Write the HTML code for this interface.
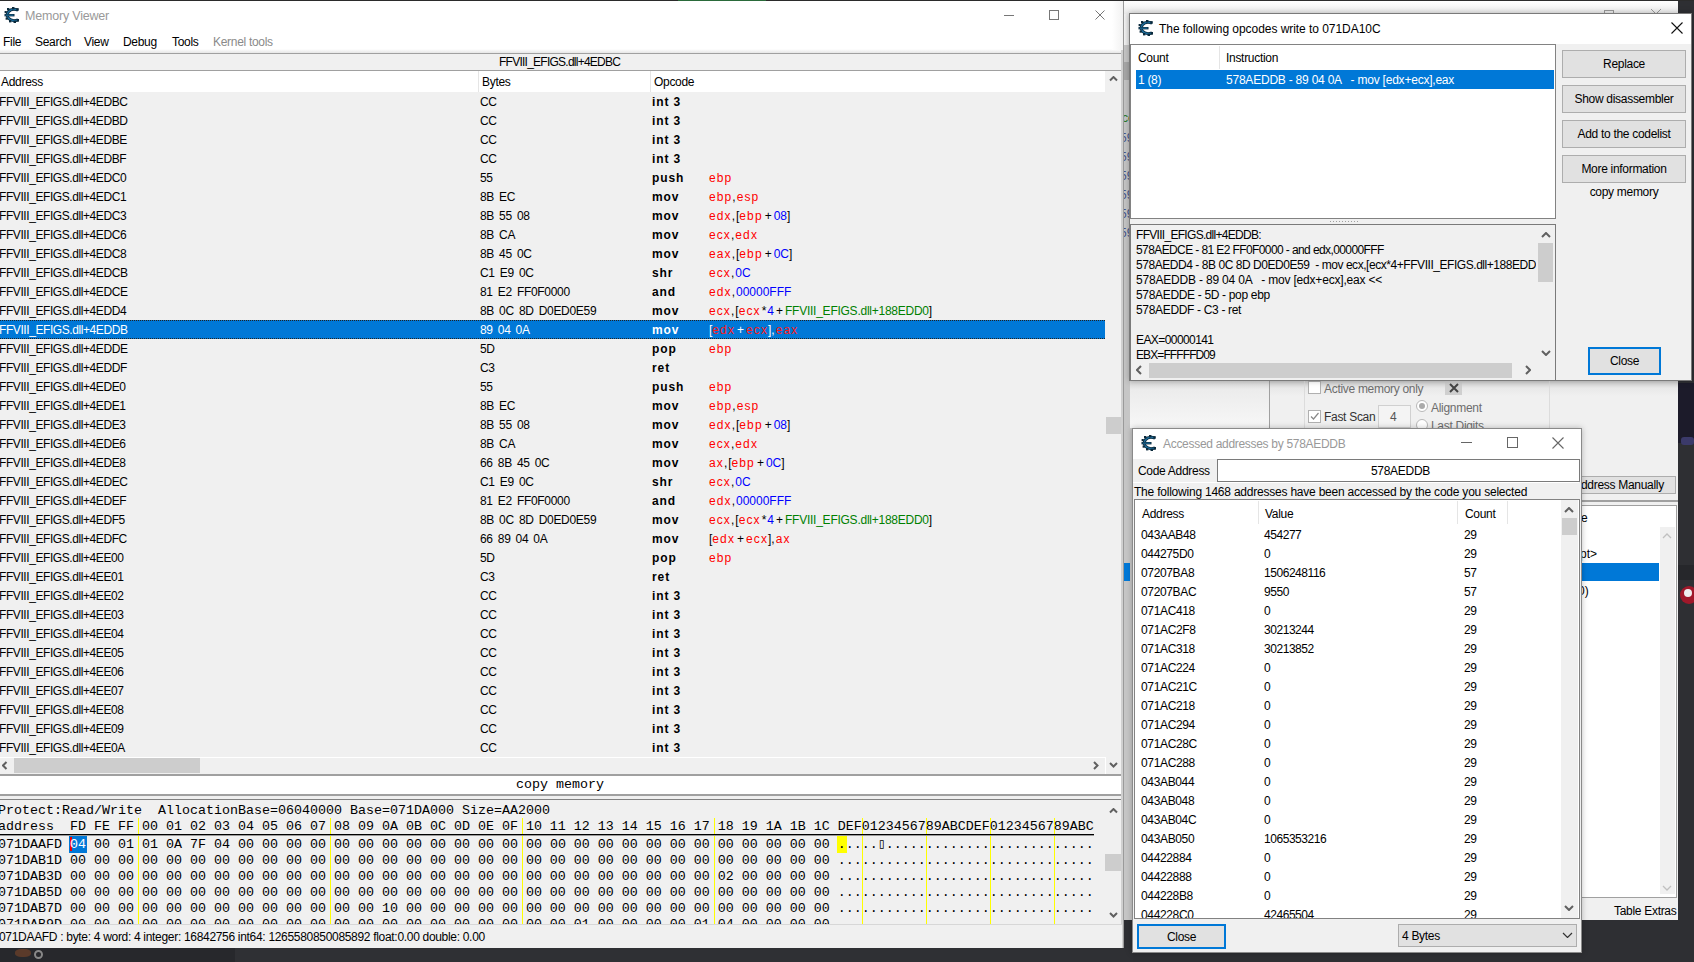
<!DOCTYPE html><html><head><meta charset="utf-8"><style>
*{margin:0;padding:0;box-sizing:border-box}
html,body{width:1694px;height:962px;overflow:hidden;background:#2e2f33;font-family:"Liberation Sans", sans-serif;font-size:12px;color:#000}
.a{position:absolute}
.t{position:absolute;white-space:pre;line-height:14px;padding-top:1px}
.m{font-family:"Liberation Mono", monospace;font-size:13.33px;line-height:16px;white-space:pre;position:absolute}
.b{font-weight:bold}
.r{color:#f00} .bl{color:#00f} .g{color:#008000}
</style></head><body>

<div class="a" style="left:1122px;top:0;width:556px;height:920px;background:#f0f0f0;border-right:1px solid #5a5a5a"></div>
<div class="a" style="left:1122px;top:1px;width:556px;height:13px;background:linear-gradient(#fff,#eaeaea)"></div>
<div class="a" style="left:0;top:0;width:1694px;height:1px;background:#2b2b2b"></div>
<div class="a" style="left:678px;top:0;width:88px;height:1px;background:#2a6a3a"></div>
<div class="a" style="left:0;top:1px;width:1123px;height:947px;background:#f0f0f0"></div>
<div class="a" style="left:0;top:1px;width:1123px;height:49px;background:#fff"></div>
<div class="a" style="left:0;top:49px;width:1123px;height:4px;background:linear-gradient(#fff,#e6e6e6)"></div>
<svg class="a" style="left:4px;top:7px" width="15" height="16" viewBox="0 0 15 16">
<path d="M14 3.2 Q8 0.8 4.2 5 Q2.6 8 4.2 11 Q8 15.2 14 12.8" fill="none" stroke="#0b2a3c" stroke-width="3"/>
<path d="M14 3.2 Q8 0.8 4.2 5 Q2.6 8 4.2 11 Q8 15.2 14 12.8" fill="none" stroke="#1c6e9e" stroke-width="1.4"/>
<rect x="0.5" y="7" width="10" height="2.4" fill="#0b2a3c"/><rect x="1.5" y="7.6" width="8" height="1.1" fill="#1c6e9e"/>
<rect x="3" y="1" width="2.4" height="2.4" fill="#0b2a3c"/><rect x="8" y="0" width="2.4" height="2.4" fill="#0b2a3c"/><rect x="12.3" y="1.2" width="2.4" height="2.6" fill="#0b2a3c"/>
<rect x="0.6" y="4" width="2.2" height="2.2" fill="#0b2a3c"/><rect x="1.6" y="10.5" width="2.2" height="2.2" fill="#0b2a3c"/>
<rect x="5" y="13" width="2.4" height="2.4" fill="#0b2a3c"/><rect x="9.6" y="13.6" width="2.4" height="2.4" fill="#0b2a3c"/><rect x="12.6" y="12" width="2.4" height="2.6" fill="#0b2a3c"/>
</svg>
<div class="t " style="left:25px;top:8px;color:#999;font-size:12.5px;letter-spacing:-0.2px">Memory Viewer</div>
<div class="a" style="left:1004px;top:15px;width:10px;height:1px;background:#777"></div>
<div class="a" style="left:1049px;top:10px;width:10px;height:10px;border:1px solid #777"></div>
<svg class="a" style="left:1095px;top:10px" width="10" height="10"><path d="M0.5 0.5 L9.5 9.5 M9.5 0.5 L0.5 9.5" stroke="#777" stroke-width="1"/></svg>
<div class="a" style="left:1112px;top:1px;width:11px;height:49px;background:linear-gradient(90deg,#fff,#f2f2f2)"></div>
<div class="t " style="left:3px;top:34px;color:#000;letter-spacing:-0.3px">File</div>
<div class="t " style="left:35px;top:34px;color:#000;letter-spacing:-0.3px">Search</div>
<div class="t " style="left:84px;top:34px;color:#000;letter-spacing:-0.3px">View</div>
<div class="t " style="left:123px;top:34px;color:#000;letter-spacing:-0.3px">Debug</div>
<div class="t " style="left:172px;top:34px;color:#000;letter-spacing:-0.3px">Tools</div>
<div class="t " style="left:213px;top:34px;color:#8a8a8a;letter-spacing:-0.3px">Kernel tools</div>
<div class="a" style="left:0;top:53px;width:1122px;height:18px;background:#f0f0f0;border-top:1px solid #a0a0a0;border-bottom:1px solid #a0a0a0;border-right:1px solid #d8d8d8"></div>
<div class="t " style="left:499px;top:54px;letter-spacing:-0.75px">FFVIII_EFIGS.dll+4EDBC</div>
<div class="a" style="left:0;top:71px;width:1105px;height:21px;background:#fff"></div>
<div class="a" style="left:478px;top:71px;width:1px;height:21px;background:#e5e5e5"></div>
<div class="a" style="left:650px;top:71px;width:1px;height:21px;background:#e5e5e5"></div>
<div class="t " style="left:1px;top:74px;letter-spacing:-0.3px">Address</div>
<div class="t " style="left:482px;top:74px;letter-spacing:-0.3px">Bytes</div>
<div class="t " style="left:654px;top:74px;letter-spacing:-0.3px">Opcode</div>
<div class="a" style="left:1105px;top:71px;width:17px;height:686px;background:#f0f0f0"></div>
<svg class="a" style="left:1108.5px;top:76.25px" width="9" height="5.5"><polyline transform="translate(1,1)" points="0,3.5 3.5,0 7,3.5" fill="none" stroke="#606060" stroke-width="2"/></svg>
<svg class="a" style="left:1108.5px;top:762.25px" width="9" height="5.5"><polyline transform="translate(1,1)" points="0,0 3.5,3.5 7,0" fill="none" stroke="#606060" stroke-width="2"/></svg>
<div class="a" style="left:1106px;top:417px;width:15px;height:17px;background:#cdcdcd"></div>
<div class="a" style="left:0;top:92px;width:1105px;height:665px;overflow:hidden">
<div class="t" style="left:-1px;top:2px;color:#000;letter-spacing:-0.42px">FFVIII_EFIGS.dll+4EDBC</div>
<div class="t" style="left:480px;top:2px;color:#000;letter-spacing:-0.3px;word-spacing:2px">CC</div>
<div class="t b" style="left:652px;top:2px;color:#000;letter-spacing:0.9px">int 3</div>
<div class="t" style="left:-1px;top:21px;color:#000;letter-spacing:-0.42px">FFVIII_EFIGS.dll+4EDBD</div>
<div class="t" style="left:480px;top:21px;color:#000;letter-spacing:-0.3px;word-spacing:2px">CC</div>
<div class="t b" style="left:652px;top:21px;color:#000;letter-spacing:0.9px">int 3</div>
<div class="t" style="left:-1px;top:40px;color:#000;letter-spacing:-0.42px">FFVIII_EFIGS.dll+4EDBE</div>
<div class="t" style="left:480px;top:40px;color:#000;letter-spacing:-0.3px;word-spacing:2px">CC</div>
<div class="t b" style="left:652px;top:40px;color:#000;letter-spacing:0.9px">int 3</div>
<div class="t" style="left:-1px;top:59px;color:#000;letter-spacing:-0.42px">FFVIII_EFIGS.dll+4EDBF</div>
<div class="t" style="left:480px;top:59px;color:#000;letter-spacing:-0.3px;word-spacing:2px">CC</div>
<div class="t b" style="left:652px;top:59px;color:#000;letter-spacing:0.9px">int 3</div>
<div class="t" style="left:-1px;top:78px;color:#000;letter-spacing:-0.42px">FFVIII_EFIGS.dll+4EDC0</div>
<div class="t" style="left:480px;top:78px;color:#000;letter-spacing:-0.3px;word-spacing:2px">55</div>
<div class="t b" style="left:652px;top:78px;color:#000;letter-spacing:0.9px">push</div>
<div class="t" style="left:709px;top:78px;letter-spacing:-0.15px"><span style="color:#ff0000;letter-spacing:1.1px">ebp</span></div>
<div class="t" style="left:-1px;top:97px;color:#000;letter-spacing:-0.42px">FFVIII_EFIGS.dll+4EDC1</div>
<div class="t" style="left:480px;top:97px;color:#000;letter-spacing:-0.3px;word-spacing:2px">8B EC</div>
<div class="t b" style="left:652px;top:97px;color:#000;letter-spacing:0.9px">mov</div>
<div class="t" style="left:709px;top:97px;letter-spacing:-0.15px"><span style="color:#ff0000;letter-spacing:1.1px">ebp</span><span style="color:#000;letter-spacing:0"><span style="margin-right:1px">,</span></span><span style="color:#ff0000;letter-spacing:1.1px">esp</span></div>
<div class="t" style="left:-1px;top:116px;color:#000;letter-spacing:-0.42px">FFVIII_EFIGS.dll+4EDC3</div>
<div class="t" style="left:480px;top:116px;color:#000;letter-spacing:-0.3px;word-spacing:2px">8B 55 08</div>
<div class="t b" style="left:652px;top:116px;color:#000;letter-spacing:0.9px">mov</div>
<div class="t" style="left:709px;top:116px;letter-spacing:-0.15px"><span style="color:#ff0000;letter-spacing:1.1px">edx</span><span style="color:#000;letter-spacing:0"><span style="margin-right:1px">,</span>[</span><span style="color:#ff0000;letter-spacing:1.1px">ebp</span><span style="color:#000;letter-spacing:0"><span style="margin:0 2px">+</span></span><span style="color:#0000ff;letter-spacing:0">08</span><span style="color:#000;letter-spacing:0">]</span></div>
<div class="t" style="left:-1px;top:135px;color:#000;letter-spacing:-0.42px">FFVIII_EFIGS.dll+4EDC6</div>
<div class="t" style="left:480px;top:135px;color:#000;letter-spacing:-0.3px;word-spacing:2px">8B CA</div>
<div class="t b" style="left:652px;top:135px;color:#000;letter-spacing:0.9px">mov</div>
<div class="t" style="left:709px;top:135px;letter-spacing:-0.15px"><span style="color:#ff0000;letter-spacing:1.1px">ecx</span><span style="color:#000;letter-spacing:0"><span style="margin-right:1px">,</span></span><span style="color:#ff0000;letter-spacing:1.1px">edx</span></div>
<div class="t" style="left:-1px;top:154px;color:#000;letter-spacing:-0.42px">FFVIII_EFIGS.dll+4EDC8</div>
<div class="t" style="left:480px;top:154px;color:#000;letter-spacing:-0.3px;word-spacing:2px">8B 45 0C</div>
<div class="t b" style="left:652px;top:154px;color:#000;letter-spacing:0.9px">mov</div>
<div class="t" style="left:709px;top:154px;letter-spacing:-0.15px"><span style="color:#ff0000;letter-spacing:1.1px">eax</span><span style="color:#000;letter-spacing:0"><span style="margin-right:1px">,</span>[</span><span style="color:#ff0000;letter-spacing:1.1px">ebp</span><span style="color:#000;letter-spacing:0"><span style="margin:0 2px">+</span></span><span style="color:#0000ff;letter-spacing:0">0C</span><span style="color:#000;letter-spacing:0">]</span></div>
<div class="t" style="left:-1px;top:173px;color:#000;letter-spacing:-0.42px">FFVIII_EFIGS.dll+4EDCB</div>
<div class="t" style="left:480px;top:173px;color:#000;letter-spacing:-0.3px;word-spacing:2px">C1 E9 0C</div>
<div class="t b" style="left:652px;top:173px;color:#000;letter-spacing:0.9px">shr</div>
<div class="t" style="left:709px;top:173px;letter-spacing:-0.15px"><span style="color:#ff0000;letter-spacing:1.1px">ecx</span><span style="color:#000;letter-spacing:0"><span style="margin-right:1px">,</span></span><span style="color:#0000ff;letter-spacing:0">0C</span></div>
<div class="t" style="left:-1px;top:192px;color:#000;letter-spacing:-0.42px">FFVIII_EFIGS.dll+4EDCE</div>
<div class="t" style="left:480px;top:192px;color:#000;letter-spacing:-0.3px;word-spacing:2px">81 E2 FF0F0000</div>
<div class="t b" style="left:652px;top:192px;color:#000;letter-spacing:0.9px">and</div>
<div class="t" style="left:709px;top:192px;letter-spacing:-0.15px"><span style="color:#ff0000;letter-spacing:1.1px">edx</span><span style="color:#000;letter-spacing:0"><span style="margin-right:1px">,</span></span><span style="color:#0000ff;letter-spacing:0">00000FFF</span></div>
<div class="t" style="left:-1px;top:211px;color:#000;letter-spacing:-0.42px">FFVIII_EFIGS.dll+4EDD4</div>
<div class="t" style="left:480px;top:211px;color:#000;letter-spacing:-0.3px;word-spacing:2px">8B 0C 8D D0ED0E59</div>
<div class="t b" style="left:652px;top:211px;color:#000;letter-spacing:0.9px">mov</div>
<div class="t" style="left:709px;top:211px;letter-spacing:-0.15px"><span style="color:#ff0000;letter-spacing:1.1px">ecx</span><span style="color:#000;letter-spacing:0"><span style="margin-right:1px">,</span>[</span><span style="color:#ff0000;letter-spacing:1.1px">ecx</span><span style="color:#000;letter-spacing:0"><span style="margin:0 1px">*</span></span><span style="color:#0000ff;letter-spacing:0">4</span><span style="color:#000;letter-spacing:0"><span style="margin:0 2px">+</span></span><span style="color:#008000;letter-spacing:-0.25px">FFVIII_EFIGS.dll+188EDD0</span><span style="color:#000;letter-spacing:0">]</span></div>
<div class="a" style="left:0;top:228px;width:1105px;height:19px;background:#0078d7;border-top:1px dotted #222;border-bottom:1px dotted #222"></div>
<div class="t" style="left:-1px;top:230px;color:#fff;letter-spacing:-0.42px">FFVIII_EFIGS.dll+4EDDB</div>
<div class="t" style="left:480px;top:230px;color:#fff;letter-spacing:-0.3px;word-spacing:2px">89 04 0A</div>
<div class="t b" style="left:652px;top:230px;color:#fff;letter-spacing:0.9px">mov</div>
<div class="t" style="left:709px;top:230px;letter-spacing:-0.15px"><span style="color:#fff;letter-spacing:0">[</span><span style="color:#ff1a1a;letter-spacing:1.1px">edx</span><span style="color:#fff;letter-spacing:0"><span style="margin:0 2px">+</span></span><span style="color:#ff1a1a;letter-spacing:1.1px">ecx</span><span style="color:#fff;letter-spacing:0">]<span style="margin-right:1px">,</span></span><span style="color:#ff1a1a;letter-spacing:1.1px">eax</span></div>
<div class="t" style="left:-1px;top:249px;color:#000;letter-spacing:-0.42px">FFVIII_EFIGS.dll+4EDDE</div>
<div class="t" style="left:480px;top:249px;color:#000;letter-spacing:-0.3px;word-spacing:2px">5D</div>
<div class="t b" style="left:652px;top:249px;color:#000;letter-spacing:0.9px">pop</div>
<div class="t" style="left:709px;top:249px;letter-spacing:-0.15px"><span style="color:#ff0000;letter-spacing:1.1px">ebp</span></div>
<div class="t" style="left:-1px;top:268px;color:#000;letter-spacing:-0.42px">FFVIII_EFIGS.dll+4EDDF</div>
<div class="t" style="left:480px;top:268px;color:#000;letter-spacing:-0.3px;word-spacing:2px">C3</div>
<div class="t b" style="left:652px;top:268px;color:#000;letter-spacing:0.9px">ret</div>
<div class="t" style="left:-1px;top:287px;color:#000;letter-spacing:-0.42px">FFVIII_EFIGS.dll+4EDE0</div>
<div class="t" style="left:480px;top:287px;color:#000;letter-spacing:-0.3px;word-spacing:2px">55</div>
<div class="t b" style="left:652px;top:287px;color:#000;letter-spacing:0.9px">push</div>
<div class="t" style="left:709px;top:287px;letter-spacing:-0.15px"><span style="color:#ff0000;letter-spacing:1.1px">ebp</span></div>
<div class="t" style="left:-1px;top:306px;color:#000;letter-spacing:-0.42px">FFVIII_EFIGS.dll+4EDE1</div>
<div class="t" style="left:480px;top:306px;color:#000;letter-spacing:-0.3px;word-spacing:2px">8B EC</div>
<div class="t b" style="left:652px;top:306px;color:#000;letter-spacing:0.9px">mov</div>
<div class="t" style="left:709px;top:306px;letter-spacing:-0.15px"><span style="color:#ff0000;letter-spacing:1.1px">ebp</span><span style="color:#000;letter-spacing:0"><span style="margin-right:1px">,</span></span><span style="color:#ff0000;letter-spacing:1.1px">esp</span></div>
<div class="t" style="left:-1px;top:325px;color:#000;letter-spacing:-0.42px">FFVIII_EFIGS.dll+4EDE3</div>
<div class="t" style="left:480px;top:325px;color:#000;letter-spacing:-0.3px;word-spacing:2px">8B 55 08</div>
<div class="t b" style="left:652px;top:325px;color:#000;letter-spacing:0.9px">mov</div>
<div class="t" style="left:709px;top:325px;letter-spacing:-0.15px"><span style="color:#ff0000;letter-spacing:1.1px">edx</span><span style="color:#000;letter-spacing:0"><span style="margin-right:1px">,</span>[</span><span style="color:#ff0000;letter-spacing:1.1px">ebp</span><span style="color:#000;letter-spacing:0"><span style="margin:0 2px">+</span></span><span style="color:#0000ff;letter-spacing:0">08</span><span style="color:#000;letter-spacing:0">]</span></div>
<div class="t" style="left:-1px;top:344px;color:#000;letter-spacing:-0.42px">FFVIII_EFIGS.dll+4EDE6</div>
<div class="t" style="left:480px;top:344px;color:#000;letter-spacing:-0.3px;word-spacing:2px">8B CA</div>
<div class="t b" style="left:652px;top:344px;color:#000;letter-spacing:0.9px">mov</div>
<div class="t" style="left:709px;top:344px;letter-spacing:-0.15px"><span style="color:#ff0000;letter-spacing:1.1px">ecx</span><span style="color:#000;letter-spacing:0"><span style="margin-right:1px">,</span></span><span style="color:#ff0000;letter-spacing:1.1px">edx</span></div>
<div class="t" style="left:-1px;top:363px;color:#000;letter-spacing:-0.42px">FFVIII_EFIGS.dll+4EDE8</div>
<div class="t" style="left:480px;top:363px;color:#000;letter-spacing:-0.3px;word-spacing:2px">66 8B 45 0C</div>
<div class="t b" style="left:652px;top:363px;color:#000;letter-spacing:0.9px">mov</div>
<div class="t" style="left:709px;top:363px;letter-spacing:-0.15px"><span style="color:#ff0000;letter-spacing:1.1px">ax</span><span style="color:#000;letter-spacing:0"><span style="margin-right:1px">,</span>[</span><span style="color:#ff0000;letter-spacing:1.1px">ebp</span><span style="color:#000;letter-spacing:0"><span style="margin:0 2px">+</span></span><span style="color:#0000ff;letter-spacing:0">0C</span><span style="color:#000;letter-spacing:0">]</span></div>
<div class="t" style="left:-1px;top:382px;color:#000;letter-spacing:-0.42px">FFVIII_EFIGS.dll+4EDEC</div>
<div class="t" style="left:480px;top:382px;color:#000;letter-spacing:-0.3px;word-spacing:2px">C1 E9 0C</div>
<div class="t b" style="left:652px;top:382px;color:#000;letter-spacing:0.9px">shr</div>
<div class="t" style="left:709px;top:382px;letter-spacing:-0.15px"><span style="color:#ff0000;letter-spacing:1.1px">ecx</span><span style="color:#000;letter-spacing:0"><span style="margin-right:1px">,</span></span><span style="color:#0000ff;letter-spacing:0">0C</span></div>
<div class="t" style="left:-1px;top:401px;color:#000;letter-spacing:-0.42px">FFVIII_EFIGS.dll+4EDEF</div>
<div class="t" style="left:480px;top:401px;color:#000;letter-spacing:-0.3px;word-spacing:2px">81 E2 FF0F0000</div>
<div class="t b" style="left:652px;top:401px;color:#000;letter-spacing:0.9px">and</div>
<div class="t" style="left:709px;top:401px;letter-spacing:-0.15px"><span style="color:#ff0000;letter-spacing:1.1px">edx</span><span style="color:#000;letter-spacing:0"><span style="margin-right:1px">,</span></span><span style="color:#0000ff;letter-spacing:0">00000FFF</span></div>
<div class="t" style="left:-1px;top:420px;color:#000;letter-spacing:-0.42px">FFVIII_EFIGS.dll+4EDF5</div>
<div class="t" style="left:480px;top:420px;color:#000;letter-spacing:-0.3px;word-spacing:2px">8B 0C 8D D0ED0E59</div>
<div class="t b" style="left:652px;top:420px;color:#000;letter-spacing:0.9px">mov</div>
<div class="t" style="left:709px;top:420px;letter-spacing:-0.15px"><span style="color:#ff0000;letter-spacing:1.1px">ecx</span><span style="color:#000;letter-spacing:0"><span style="margin-right:1px">,</span>[</span><span style="color:#ff0000;letter-spacing:1.1px">ecx</span><span style="color:#000;letter-spacing:0"><span style="margin:0 1px">*</span></span><span style="color:#0000ff;letter-spacing:0">4</span><span style="color:#000;letter-spacing:0"><span style="margin:0 2px">+</span></span><span style="color:#008000;letter-spacing:-0.25px">FFVIII_EFIGS.dll+188EDD0</span><span style="color:#000;letter-spacing:0">]</span></div>
<div class="t" style="left:-1px;top:439px;color:#000;letter-spacing:-0.42px">FFVIII_EFIGS.dll+4EDFC</div>
<div class="t" style="left:480px;top:439px;color:#000;letter-spacing:-0.3px;word-spacing:2px">66 89 04 0A</div>
<div class="t b" style="left:652px;top:439px;color:#000;letter-spacing:0.9px">mov</div>
<div class="t" style="left:709px;top:439px;letter-spacing:-0.15px"><span style="color:#000;letter-spacing:0">[</span><span style="color:#ff0000;letter-spacing:1.1px">edx</span><span style="color:#000;letter-spacing:0"><span style="margin:0 2px">+</span></span><span style="color:#ff0000;letter-spacing:1.1px">ecx</span><span style="color:#000;letter-spacing:0">]<span style="margin-right:1px">,</span></span><span style="color:#ff0000;letter-spacing:1.1px">ax</span></div>
<div class="t" style="left:-1px;top:458px;color:#000;letter-spacing:-0.42px">FFVIII_EFIGS.dll+4EE00</div>
<div class="t" style="left:480px;top:458px;color:#000;letter-spacing:-0.3px;word-spacing:2px">5D</div>
<div class="t b" style="left:652px;top:458px;color:#000;letter-spacing:0.9px">pop</div>
<div class="t" style="left:709px;top:458px;letter-spacing:-0.15px"><span style="color:#ff0000;letter-spacing:1.1px">ebp</span></div>
<div class="t" style="left:-1px;top:477px;color:#000;letter-spacing:-0.42px">FFVIII_EFIGS.dll+4EE01</div>
<div class="t" style="left:480px;top:477px;color:#000;letter-spacing:-0.3px;word-spacing:2px">C3</div>
<div class="t b" style="left:652px;top:477px;color:#000;letter-spacing:0.9px">ret</div>
<div class="t" style="left:-1px;top:496px;color:#000;letter-spacing:-0.42px">FFVIII_EFIGS.dll+4EE02</div>
<div class="t" style="left:480px;top:496px;color:#000;letter-spacing:-0.3px;word-spacing:2px">CC</div>
<div class="t b" style="left:652px;top:496px;color:#000;letter-spacing:0.9px">int 3</div>
<div class="t" style="left:-1px;top:515px;color:#000;letter-spacing:-0.42px">FFVIII_EFIGS.dll+4EE03</div>
<div class="t" style="left:480px;top:515px;color:#000;letter-spacing:-0.3px;word-spacing:2px">CC</div>
<div class="t b" style="left:652px;top:515px;color:#000;letter-spacing:0.9px">int 3</div>
<div class="t" style="left:-1px;top:534px;color:#000;letter-spacing:-0.42px">FFVIII_EFIGS.dll+4EE04</div>
<div class="t" style="left:480px;top:534px;color:#000;letter-spacing:-0.3px;word-spacing:2px">CC</div>
<div class="t b" style="left:652px;top:534px;color:#000;letter-spacing:0.9px">int 3</div>
<div class="t" style="left:-1px;top:553px;color:#000;letter-spacing:-0.42px">FFVIII_EFIGS.dll+4EE05</div>
<div class="t" style="left:480px;top:553px;color:#000;letter-spacing:-0.3px;word-spacing:2px">CC</div>
<div class="t b" style="left:652px;top:553px;color:#000;letter-spacing:0.9px">int 3</div>
<div class="t" style="left:-1px;top:572px;color:#000;letter-spacing:-0.42px">FFVIII_EFIGS.dll+4EE06</div>
<div class="t" style="left:480px;top:572px;color:#000;letter-spacing:-0.3px;word-spacing:2px">CC</div>
<div class="t b" style="left:652px;top:572px;color:#000;letter-spacing:0.9px">int 3</div>
<div class="t" style="left:-1px;top:591px;color:#000;letter-spacing:-0.42px">FFVIII_EFIGS.dll+4EE07</div>
<div class="t" style="left:480px;top:591px;color:#000;letter-spacing:-0.3px;word-spacing:2px">CC</div>
<div class="t b" style="left:652px;top:591px;color:#000;letter-spacing:0.9px">int 3</div>
<div class="t" style="left:-1px;top:610px;color:#000;letter-spacing:-0.42px">FFVIII_EFIGS.dll+4EE08</div>
<div class="t" style="left:480px;top:610px;color:#000;letter-spacing:-0.3px;word-spacing:2px">CC</div>
<div class="t b" style="left:652px;top:610px;color:#000;letter-spacing:0.9px">int 3</div>
<div class="t" style="left:-1px;top:629px;color:#000;letter-spacing:-0.42px">FFVIII_EFIGS.dll+4EE09</div>
<div class="t" style="left:480px;top:629px;color:#000;letter-spacing:-0.3px;word-spacing:2px">CC</div>
<div class="t b" style="left:652px;top:629px;color:#000;letter-spacing:0.9px">int 3</div>
<div class="t" style="left:-1px;top:648px;color:#000;letter-spacing:-0.42px">FFVIII_EFIGS.dll+4EE0A</div>
<div class="t" style="left:480px;top:648px;color:#000;letter-spacing:-0.3px;word-spacing:2px">CC</div>
<div class="t b" style="left:652px;top:648px;color:#000;letter-spacing:0.9px">int 3</div>
</div>
<div class="a" style="left:0;top:757px;width:1105px;height:17px;background:#f0f0f0"></div>
<svg class="a" style="left:2.25px;top:760.5px" width="5.5" height="9"><polyline transform="translate(1,1)" points="3.5,0 0,3.5 3.5,7" fill="none" stroke="#606060" stroke-width="2"/></svg>
<svg class="a" style="left:1093.25px;top:760.5px" width="5.5" height="9"><polyline transform="translate(1,1)" points="0,0 3.5,3.5 0,7" fill="none" stroke="#606060" stroke-width="2"/></svg>
<div class="a" style="left:14px;top:758px;width:186px;height:15px;background:#cdcdcd"></div>
<div class="a" style="left:0;top:757px;width:1105px;height:1px;background:#fff"></div>
<div class="a" style="left:1105px;top:757px;width:1px;height:17px;background:#fff"></div>
<div class="a" style="left:0;top:774px;width:1122px;height:2px;background:#a0a0a0"></div>
<div class="a" style="left:0;top:776px;width:1122px;height:20px;background:#fff;border-bottom:2px solid #a0a0a0"></div>
<div class="m" style="left:516px;top:777px">copy memory</div>
<div class="a" style="left:0;top:796px;width:1122px;height:4px;background:#f0f0f0"></div>
<div class="a" style="left:0;top:799px;width:1122px;height:125px;background:#f0f0f0;border-top:1px solid #828282;overflow:hidden">
<div class="a" style="left:138px;top:18px;width:1px;height:110px;background:#ffff00"></div>
<div class="a" style="left:330px;top:18px;width:1px;height:110px;background:#ffff00"></div>
<div class="a" style="left:522px;top:18px;width:1px;height:110px;background:#ffff00"></div>
<div class="a" style="left:714px;top:18px;width:1px;height:110px;background:#ffff00"></div>
<div class="a" style="left:862px;top:18px;width:1px;height:110px;background:#ffff00"></div>
<div class="a" style="left:926px;top:18px;width:1px;height:110px;background:#ffff00"></div>
<div class="a" style="left:990px;top:18px;width:1px;height:110px;background:#ffff00"></div>
<div class="a" style="left:1054px;top:18px;width:1px;height:110px;background:#ffff00"></div>
<div class="a" style="left:0;top:34px;width:1094px;height:1px;background:#000"></div>
<div class="a" style="left:0;top:35px;width:1094px;height:1px;background:#9a9a9a"></div>
<div class="a" style="left:69px;top:36px;width:18px;height:17px;background:#0078d7"></div>
<div class="a" style="left:70px;top:37px;width:2px;height:14px;background:#e00"></div>
<div class="a" style="left:837px;top:36px;width:10px;height:17px;background:#ffff00"></div>
<div class="m" style="left:-2px;top:2.5px">Protect:Read/Write  AllocationBase=06040000 Base=071DA000 Size=AA2000</div>
<div class="m" style="left:-2px;top:19px">address  FD FE FF 00 01 02 03 04 05 06 07 08 09 0A 0B 0C 0D 0E 0F 10 11 12 13 14 15 16 17 18 19 1A 1B 1C DEF0123456789ABCDEF0123456789ABC</div>
<div class="m" style="left:-2px;top:36.5px">071DAAFD <span style="color:#fff">04</span> 00 01 01 0A 7F 04 00 00 00 00 00 00 00 00 00 00 00 00 00 00 00 00 00 00 00 00 00 00 00 00 00 .....&#9647;..........................</div>
<div class="m" style="left:-2px;top:52.5px">071DAB1D 00 00 00 00 00 00 00 00 00 00 00 00 00 00 00 00 00 00 00 00 00 00 00 00 00 00 00 00 00 00 00 00 ................................</div>
<div class="m" style="left:-2px;top:68.5px">071DAB3D 00 00 00 00 00 00 00 00 00 00 00 00 00 00 00 00 00 00 00 00 00 00 00 00 00 00 00 02 00 00 00 00 ................................</div>
<div class="m" style="left:-2px;top:84.5px">071DAB5D 00 00 00 00 00 00 00 00 00 00 00 00 00 00 00 00 00 00 00 00 00 00 00 00 00 00 00 00 00 00 00 00 ................................</div>
<div class="m" style="left:-2px;top:100.5px">071DAB7D 00 00 00 00 00 00 00 00 00 00 00 00 00 10 00 00 00 00 00 00 00 00 00 00 00 00 00 00 00 00 00 00 ................................</div>
<div class="m" style="left:-2px;top:116.5px">071DAB9D 00 00 00 00 00 00 00 00 00 00 00 00 00 00 00 00 00 00 00 00 00 01 00 00 00 00 01 04 00 00 00 00 ................................</div>
</div>
<div class="a" style="left:1104px;top:800px;width:18px;height:124px;background:#f0f0f0"></div>
<svg class="a" style="left:1108.5px;top:808.25px" width="9" height="5.5"><polyline transform="translate(1,1)" points="0,3.5 3.5,0 7,3.5" fill="none" stroke="#606060" stroke-width="2"/></svg>
<svg class="a" style="left:1108.5px;top:912.25px" width="9" height="5.5"><polyline transform="translate(1,1)" points="0,0 3.5,3.5 7,0" fill="none" stroke="#606060" stroke-width="2"/></svg>
<div class="a" style="left:1105px;top:854px;width:16px;height:17px;background:#cdcdcd"></div>
<div class="a" style="left:1121px;top:50px;width:2px;height:898px;background:#d0d0d0"></div>
<div class="a" style="left:0;top:924px;width:1122px;height:24px;background:#f0f0f0;border-top:1px solid #d7d7d7"></div>
<div class="a" style="left:1123px;top:1px;width:1px;height:947px;background:#9a9a9a"></div>
<div class="t " style="left:-1px;top:929px;letter-spacing:-0.31px">071DAAFD : byte: 4 word: 4 integer: 16842756 int64: 1265580850085892 float:0.00 double: 0.00</div>
<div class="a" style="left:1124px;top:45px;width:9px;height:875px;background:#c6c6c6"></div>
<div class="a" style="left:1124px;top:14px;width:5px;height:31px;background:linear-gradient(90deg,#f4f4f4,#e4e4e4)"></div>
<div class="a" style="left:1124px;top:62px;width:5px;height:18px;background:#a8a8a8"></div>
<div class="a" style="left:1124px;top:100px;width:5px;height:160px;overflow:hidden">
<div class="t" style="left:-2px;top:10px;color:#2a7a2a">ce</div>
<div class="t" style="left:-4px;top:30px;color:#44548a">59</div>
<div class="t" style="left:-4px;top:49px;color:#44548a">59</div>
<div class="t" style="left:-4px;top:68px;color:#44548a">59</div>
<div class="t" style="left:-4px;top:87px;color:#44548a">59</div>
<div class="t" style="left:-4px;top:106px;color:#44548a">59</div>
<div class="t" style="left:-4px;top:125px;color:#44548a">59</div>
</div>
<div class="a" style="left:1124px;top:563px;width:6px;height:18px;background:#0078d7"></div>
<div class="a" style="left:1604px;top:10px;width:10px;height:4px;border:1px solid #999;border-bottom:none"></div>
<svg class="a" style="left:1650px;top:9px" width="12" height="5"><path d="M1 0L6 5L11 0" stroke="#999" stroke-width="1" fill="none"/></svg>
<div class="a" style="left:0;top:948px;width:235px;height:14px;background:#27282c"></div>
<div class="a" style="left:235px;top:948px;width:898px;height:14px;background:#2f3034"></div>
<div class="a" style="left:15px;top:949px;width:16px;height:8px;border-radius:40%;background:#5a3a2a"></div>
<div class="a" style="left:34px;top:950px;width:9px;height:9px;border-radius:50%;border:2px solid #888"></div>
<div class="a" style="left:1678px;top:383px;width:16px;height:60px;background:#1c1b2a"></div>
<div class="a" style="left:1681px;top:437px;width:13px;height:8px;background:#3b3a6a;border-radius:3px"></div>
<div class="a" style="left:1678px;top:565px;width:16px;height:15px;background:#26272b"></div>
<div class="a" style="left:1680px;top:586px;width:18px;height:18px;border-radius:50%;background:#a0182a"></div>
<div class="a" style="left:1684px;top:589px;width:8px;height:8px;border-radius:50%;background:#eee"></div>
<div class="a" style="left:1130px;top:380px;width:548px;height:48px;background:linear-gradient(#c8c8c8,#e8e8e8 8px,#f0f0f0 16px)"></div>
<div class="a" style="left:1130px;top:380px;width:139px;height:48px;background:linear-gradient(#d4d4d4,#ececec 10px,#f7f7f7)"></div>
<div class="a" style="left:1269px;top:380px;width:1px;height:48px;background:#a0a0a0"></div>
<div class="a" style="left:1304px;top:380px;width:1px;height:48px;background:#dcdcdc"></div>
<div class="a" style="left:1549px;top:380px;width:1px;height:48px;background:#dcdcdc"></div>
<div class="a" style="left:1308px;top:381px;width:13px;height:13px;background:#fff;border:1px solid #b0b0b0"></div>
<div class="t " style="left:1324px;top:381px;color:#6d6d6d;letter-spacing:-0.3px">Active memory only</div>
<div class="a" style="left:1445px;top:381px;width:17px;height:14px;background:#cfcfcf"></div>
<svg class="a" style="left:1449px;top:383px" width="10" height="10"><path d="M1 1L9 9M9 1L1 9" stroke="#444" stroke-width="2"/></svg>
<div class="a" style="left:1308px;top:410px;width:13px;height:13px;background:#fff;border:1px solid #b0b0b0"></div>
<svg class="a" style="left:1309px;top:411px" width="11" height="11"><path d="M2 5.5L4.5 8L9.5 2" fill="none" stroke="#888" stroke-width="1.2"/></svg>
<div class="t " style="left:1324px;top:409px;color:#333;letter-spacing:-0.3px">Fast Scan</div>
<div class="a" style="left:1378px;top:405px;width:33px;height:23px;background:#f4f4f4;border:1px solid #d0d0d0"></div>
<div class="t " style="left:1390px;top:409px;color:#555">4</div>
<div class="a" style="left:1416px;top:400px;width:12px;height:12px;border-radius:50%;border:1px solid #b8b8b8;background:#fff"></div>
<div class="a" style="left:1419px;top:403px;width:6px;height:6px;border-radius:50%;background:#aaa"></div>
<div class="t " style="left:1431px;top:400px;color:#6d6d6d;letter-spacing:-0.3px">Alignment</div>
<div class="a" style="left:1416px;top:419px;width:12px;height:12px;border-radius:50%;border:1px solid #b8b8b8;background:#fff"></div>
<div class="t " style="left:1431px;top:418px;color:#6d6d6d;letter-spacing:-0.3px">Last Digits</div>
<div class="a" style="left:1580px;top:428px;width:98px;height:492px;background:#f0f0f0"></div>
<div class="a" style="left:1560px;top:476px;width:116px;height:18px;background:#e1e1e1;border:1px solid #adadad"></div>
<div class="t " style="left:1581px;top:477px;letter-spacing:-0.3px">ddress Manually</div>
<div class="a" style="left:1560px;top:500px;width:118px;height:2px;background:#a0a0a0"></div>
<div class="a" style="left:1560px;top:505px;width:117px;height:393px;background:#fff;border:1px solid #a0a0a0"></div>
<div class="t " style="left:1581px;top:510px;">e</div>
<div class="t " style="left:1580px;top:546px;">pt&gt;</div>
<div class="a" style="left:1560px;top:563px;width:99px;height:18px;background:#0078d7"></div>
<div class="t " style="left:1578px;top:583px;">0)</div>
<div class="a" style="left:1660px;top:527px;width:15px;height:367px;background:#f0f0f0"></div>
<svg class="a" style="left:1662.0px;top:533.0px" width="10" height="6.0"><polyline transform="translate(1,1)" points="0,4.0 4.0,0 8,4.0" fill="none" stroke="#c0c0c0" stroke-width="1.3"/></svg>
<svg class="a" style="left:1662.0px;top:885.0px" width="10" height="6.0"><polyline transform="translate(1,1)" points="0,0 4.0,4.0 8,0" fill="none" stroke="#c0c0c0" stroke-width="1.3"/></svg>
<div class="t " style="left:1614px;top:903px;letter-spacing:-0.3px">Table Extras</div>
<div class="a" style="left:1129px;top:13px;width:563px;height:368px;background:#f0f0f0;border:1px solid #7a7a7a;box-shadow:0 0 6px rgba(0,0,0,0.25)"></div>
<div class="a" style="left:1130px;top:14px;width:561px;height:30px;background:#fff"></div>
<svg class="a" style="left:1138px;top:20px" width="15" height="16" viewBox="0 0 15 16">
<path d="M14 3.2 Q8 0.8 4.2 5 Q2.6 8 4.2 11 Q8 15.2 14 12.8" fill="none" stroke="#0b2a3c" stroke-width="3"/>
<path d="M14 3.2 Q8 0.8 4.2 5 Q2.6 8 4.2 11 Q8 15.2 14 12.8" fill="none" stroke="#1c6e9e" stroke-width="1.4"/>
<rect x="0.5" y="7" width="10" height="2.4" fill="#0b2a3c"/><rect x="1.5" y="7.6" width="8" height="1.1" fill="#1c6e9e"/>
<rect x="3" y="1" width="2.4" height="2.4" fill="#0b2a3c"/><rect x="8" y="0" width="2.4" height="2.4" fill="#0b2a3c"/><rect x="12.3" y="1.2" width="2.4" height="2.6" fill="#0b2a3c"/>
<rect x="0.6" y="4" width="2.2" height="2.2" fill="#0b2a3c"/><rect x="1.6" y="10.5" width="2.2" height="2.2" fill="#0b2a3c"/>
<rect x="5" y="13" width="2.4" height="2.4" fill="#0b2a3c"/><rect x="9.6" y="13.6" width="2.4" height="2.4" fill="#0b2a3c"/><rect x="12.6" y="12" width="2.4" height="2.6" fill="#0b2a3c"/>
</svg>
<div class="t " style="left:1159px;top:21px;letter-spacing:-0.05px">The following opcodes write to 071DA10C</div>
<svg class="a" style="left:1671px;top:22px" width="12" height="12"><path d="M0.5 0.5L11.5 11.5M11.5 0.5L0.5 11.5" stroke="#111" stroke-width="1.1"/></svg>
<div class="a" style="left:1130px;top:44px;width:426px;height:175px;background:#fff;border:1px solid #828282"></div>
<div class="a" style="left:1219px;top:46px;width:1px;height:23px;background:#e5e5e5"></div>
<div class="t " style="left:1138px;top:50px;letter-spacing:-0.3px">Count</div>
<div class="t " style="left:1226px;top:50px;letter-spacing:-0.3px">Instruction</div>
<div class="a" style="left:1136px;top:70px;width:418px;height:19px;background:#0078d7"></div>
<div class="t " style="left:1138px;top:72px;color:#fff;letter-spacing:-0.3px">1 (8)</div>
<div class="t " style="left:1226px;top:72px;color:#fff;letter-spacing:-0.22px">578AEDDB - 89 04 0A   - mov [edx+ecx],eax</div>
<div class="a" style="left:1330px;top:221px;width:28px;height:1px;background:repeating-linear-gradient(90deg,#a0a0a0 0 1px,transparent 1px 3px)"></div>
<div class="a" style="left:1130px;top:224px;width:426px;height:157px;background:#f0f0f0;border:1px solid #7a7a7a"></div>
<div class="a" style="left:1131px;top:226px;width:405px;height:136px;overflow:hidden">
<div class="t" style="left:5px;top:1px;letter-spacing:-0.7px">FFVIII_EFIGS.dll+4EDDB:</div>
<div class="t" style="left:5px;top:16px;letter-spacing:-0.6px">578AEDCE - 81 E2 FF0F0000 - and edx,00000FFF</div>
<div class="t" style="left:5px;top:31px;letter-spacing:-0.45px">578AEDD4 - 8B 0C 8D D0ED0E59  - mov ecx,[ecx*4+FFVIII_EFIGS.dll+188EDD0]</div>
<div class="t" style="left:5px;top:46px;letter-spacing:-0.19px">578AEDDB - 89 04 0A   - mov [edx+ecx],eax &lt;&lt;</div>
<div class="t" style="left:5px;top:61px;letter-spacing:-0.33px">578AEDDE - 5D - pop ebp</div>
<div class="t" style="left:5px;top:76px;letter-spacing:-0.33px">578AEDDF - C3 - ret</div>
<div class="t" style="left:5px;top:91px;letter-spacing:-0.33px"></div>
<div class="t" style="left:5px;top:106px;letter-spacing:-0.58px">EAX=00000141</div>
<div class="t" style="left:5px;top:121px;letter-spacing:-0.9px">EBX=FFFFFD09</div>
</div>
<div class="a" style="left:1537px;top:226px;width:17px;height:136px;background:#f0f0f0"></div>
<svg class="a" style="left:1541.0px;top:232.0px" width="10" height="6.0"><polyline transform="translate(1,1)" points="0,4.0 4.0,0 8,4.0" fill="none" stroke="#606060" stroke-width="2"/></svg>
<svg class="a" style="left:1541.0px;top:350.0px" width="10" height="6.0"><polyline transform="translate(1,1)" points="0,0 4.0,4.0 8,0" fill="none" stroke="#606060" stroke-width="2"/></svg>
<div class="a" style="left:1538px;top:243px;width:15px;height:39px;background:#cdcdcd"></div>
<div class="a" style="left:1131px;top:362px;width:406px;height:17px;background:#f0f0f0"></div>
<svg class="a" style="left:1136.0px;top:365.0px" width="6.0" height="10"><polyline transform="translate(1,1)" points="4.0,0 0,4.0 4.0,8" fill="none" stroke="#606060" stroke-width="2"/></svg>
<svg class="a" style="left:1525.0px;top:365.0px" width="6.0" height="10"><polyline transform="translate(1,1)" points="0,0 4.0,4.0 0,8" fill="none" stroke="#606060" stroke-width="2"/></svg>
<div class="a" style="left:1149px;top:363px;width:363px;height:15px;background:#cdcdcd"></div>
<div class="a" style="left:1562px;top:50px;width:124px;height:28px;background:#e1e1e1;border:1px solid #adadad"></div>
<div class="t" style="left:1562px;top:56px;width:124px;text-align:center;letter-spacing:-0.3px">Replace</div>
<div class="a" style="left:1562px;top:85px;width:124px;height:28px;background:#e1e1e1;border:1px solid #adadad"></div>
<div class="t" style="left:1562px;top:91px;width:124px;text-align:center;letter-spacing:-0.3px">Show disassembler</div>
<div class="a" style="left:1562px;top:120px;width:124px;height:28px;background:#e1e1e1;border:1px solid #adadad"></div>
<div class="t" style="left:1562px;top:126px;width:124px;text-align:center;letter-spacing:-0.3px">Add to the codelist</div>
<div class="a" style="left:1562px;top:155px;width:124px;height:28px;background:#e1e1e1;border:1px solid #adadad"></div>
<div class="t" style="left:1562px;top:161px;width:124px;text-align:center;letter-spacing:-0.3px">More information</div>
<div class="t" style="left:1562px;top:184px;width:124px;text-align:center;letter-spacing:-0.3px">copy memory</div>
<div class="a" style="left:1588px;top:347px;width:73px;height:28px;background:#e1e1e1;border:2px solid #0078d7"></div>
<div class="t" style="left:1588px;top:353px;width:73px;text-align:center;letter-spacing:-0.3px">Close</div>
<div class="a" style="left:1132px;top:428px;width:450px;height:525px;background:#f0f0f0;border:1px solid #8a8a8a;box-shadow:0 0 6px rgba(0,0,0,0.25)"></div>
<div class="a" style="left:1133px;top:429px;width:448px;height:30px;background:#fff"></div>
<svg class="a" style="left:1141px;top:435px" width="15" height="16" viewBox="0 0 15 16">
<path d="M14 3.2 Q8 0.8 4.2 5 Q2.6 8 4.2 11 Q8 15.2 14 12.8" fill="none" stroke="#0b2a3c" stroke-width="3"/>
<path d="M14 3.2 Q8 0.8 4.2 5 Q2.6 8 4.2 11 Q8 15.2 14 12.8" fill="none" stroke="#1c6e9e" stroke-width="1.4"/>
<rect x="0.5" y="7" width="10" height="2.4" fill="#0b2a3c"/><rect x="1.5" y="7.6" width="8" height="1.1" fill="#1c6e9e"/>
<rect x="3" y="1" width="2.4" height="2.4" fill="#0b2a3c"/><rect x="8" y="0" width="2.4" height="2.4" fill="#0b2a3c"/><rect x="12.3" y="1.2" width="2.4" height="2.6" fill="#0b2a3c"/>
<rect x="0.6" y="4" width="2.2" height="2.2" fill="#0b2a3c"/><rect x="1.6" y="10.5" width="2.2" height="2.2" fill="#0b2a3c"/>
<rect x="5" y="13" width="2.4" height="2.4" fill="#0b2a3c"/><rect x="9.6" y="13.6" width="2.4" height="2.4" fill="#0b2a3c"/><rect x="12.6" y="12" width="2.4" height="2.6" fill="#0b2a3c"/>
</svg>
<div class="t " style="left:1163px;top:436px;color:#999;letter-spacing:-0.3px">Accessed addresses by 578AEDDB</div>
<div class="a" style="left:1461px;top:442px;width:11px;height:1px;background:#666"></div>
<div class="a" style="left:1507px;top:437px;width:11px;height:11px;border:1px solid #666"></div>
<svg class="a" style="left:1552px;top:437px" width="12" height="12"><path d="M0.5 0.5L11.5 11.5M11.5 0.5L0.5 11.5" stroke="#666" stroke-width="1.1"/></svg>
<div class="t " style="left:1138px;top:463px;letter-spacing:-0.3px">Code Address</div>
<div class="a" style="left:1217px;top:459px;width:363px;height:23px;background:#fff;border:1px solid #7a7a7a"></div>
<div class="t " style="left:1371px;top:463px;letter-spacing:-0.3px">578AEDDB</div>
<div class="a" style="left:1133px;top:482px;width:446px;height:1px;background:#fff"></div>
<div class="t " style="left:1134px;top:484px;letter-spacing:-0.22px">The following 1468 addresses have been accessed by the code you selected</div>
<div class="a" style="left:1134px;top:499px;width:446px;height:420px;background:#fff;border:1px solid #828282"></div>
<div class="a" style="left:1258px;top:501px;width:1px;height:23px;background:#e5e5e5"></div>
<div class="a" style="left:1457px;top:501px;width:1px;height:23px;background:#e5e5e5"></div>
<div class="a" style="left:1507px;top:501px;width:1px;height:23px;background:#e5e5e5"></div>
<div class="t " style="left:1142px;top:506px;letter-spacing:-0.3px">Address</div>
<div class="t " style="left:1265px;top:506px;letter-spacing:-0.3px">Value</div>
<div class="t " style="left:1465px;top:506px;letter-spacing:-0.3px">Count</div>
<div class="a" style="left:1135px;top:525px;width:426px;height:393px;overflow:hidden">
<div class="t" style="left:6px;top:2px;letter-spacing:-0.35px">043AAB48</div>
<div class="t" style="left:129px;top:2px;letter-spacing:-0.45px">454277</div>
<div class="t" style="left:329px;top:2px;letter-spacing:-0.35px">29</div>
<div class="t" style="left:6px;top:21px;letter-spacing:-0.35px">044275D0</div>
<div class="t" style="left:129px;top:21px;letter-spacing:-0.45px">0</div>
<div class="t" style="left:329px;top:21px;letter-spacing:-0.35px">29</div>
<div class="t" style="left:6px;top:40px;letter-spacing:-0.35px">07207BA8</div>
<div class="t" style="left:129px;top:40px;letter-spacing:-0.45px">1506248116</div>
<div class="t" style="left:329px;top:40px;letter-spacing:-0.35px">57</div>
<div class="t" style="left:6px;top:59px;letter-spacing:-0.35px">07207BAC</div>
<div class="t" style="left:129px;top:59px;letter-spacing:-0.45px">9550</div>
<div class="t" style="left:329px;top:59px;letter-spacing:-0.35px">57</div>
<div class="t" style="left:6px;top:78px;letter-spacing:-0.35px">071AC418</div>
<div class="t" style="left:129px;top:78px;letter-spacing:-0.45px">0</div>
<div class="t" style="left:329px;top:78px;letter-spacing:-0.35px">29</div>
<div class="t" style="left:6px;top:97px;letter-spacing:-0.35px">071AC2F8</div>
<div class="t" style="left:129px;top:97px;letter-spacing:-0.45px">30213244</div>
<div class="t" style="left:329px;top:97px;letter-spacing:-0.35px">29</div>
<div class="t" style="left:6px;top:116px;letter-spacing:-0.35px">071AC318</div>
<div class="t" style="left:129px;top:116px;letter-spacing:-0.45px">30213852</div>
<div class="t" style="left:329px;top:116px;letter-spacing:-0.35px">29</div>
<div class="t" style="left:6px;top:135px;letter-spacing:-0.35px">071AC224</div>
<div class="t" style="left:129px;top:135px;letter-spacing:-0.45px">0</div>
<div class="t" style="left:329px;top:135px;letter-spacing:-0.35px">29</div>
<div class="t" style="left:6px;top:154px;letter-spacing:-0.35px">071AC21C</div>
<div class="t" style="left:129px;top:154px;letter-spacing:-0.45px">0</div>
<div class="t" style="left:329px;top:154px;letter-spacing:-0.35px">29</div>
<div class="t" style="left:6px;top:173px;letter-spacing:-0.35px">071AC218</div>
<div class="t" style="left:129px;top:173px;letter-spacing:-0.45px">0</div>
<div class="t" style="left:329px;top:173px;letter-spacing:-0.35px">29</div>
<div class="t" style="left:6px;top:192px;letter-spacing:-0.35px">071AC294</div>
<div class="t" style="left:129px;top:192px;letter-spacing:-0.45px">0</div>
<div class="t" style="left:329px;top:192px;letter-spacing:-0.35px">29</div>
<div class="t" style="left:6px;top:211px;letter-spacing:-0.35px">071AC28C</div>
<div class="t" style="left:129px;top:211px;letter-spacing:-0.45px">0</div>
<div class="t" style="left:329px;top:211px;letter-spacing:-0.35px">29</div>
<div class="t" style="left:6px;top:230px;letter-spacing:-0.35px">071AC288</div>
<div class="t" style="left:129px;top:230px;letter-spacing:-0.45px">0</div>
<div class="t" style="left:329px;top:230px;letter-spacing:-0.35px">29</div>
<div class="t" style="left:6px;top:249px;letter-spacing:-0.35px">043AB044</div>
<div class="t" style="left:129px;top:249px;letter-spacing:-0.45px">0</div>
<div class="t" style="left:329px;top:249px;letter-spacing:-0.35px">29</div>
<div class="t" style="left:6px;top:268px;letter-spacing:-0.35px">043AB048</div>
<div class="t" style="left:129px;top:268px;letter-spacing:-0.45px">0</div>
<div class="t" style="left:329px;top:268px;letter-spacing:-0.35px">29</div>
<div class="t" style="left:6px;top:287px;letter-spacing:-0.35px">043AB04C</div>
<div class="t" style="left:129px;top:287px;letter-spacing:-0.45px">0</div>
<div class="t" style="left:329px;top:287px;letter-spacing:-0.35px">29</div>
<div class="t" style="left:6px;top:306px;letter-spacing:-0.35px">043AB050</div>
<div class="t" style="left:129px;top:306px;letter-spacing:-0.45px">1065353216</div>
<div class="t" style="left:329px;top:306px;letter-spacing:-0.35px">29</div>
<div class="t" style="left:6px;top:325px;letter-spacing:-0.35px">04422884</div>
<div class="t" style="left:129px;top:325px;letter-spacing:-0.45px">0</div>
<div class="t" style="left:329px;top:325px;letter-spacing:-0.35px">29</div>
<div class="t" style="left:6px;top:344px;letter-spacing:-0.35px">04422888</div>
<div class="t" style="left:129px;top:344px;letter-spacing:-0.45px">0</div>
<div class="t" style="left:329px;top:344px;letter-spacing:-0.35px">29</div>
<div class="t" style="left:6px;top:363px;letter-spacing:-0.35px">044228B8</div>
<div class="t" style="left:129px;top:363px;letter-spacing:-0.45px">0</div>
<div class="t" style="left:329px;top:363px;letter-spacing:-0.35px">29</div>
<div class="t" style="left:6px;top:382px;letter-spacing:-0.35px">044228C0</div>
<div class="t" style="left:129px;top:382px;letter-spacing:-0.45px">42465504</div>
<div class="t" style="left:329px;top:382px;letter-spacing:-0.35px">29</div>
</div>
<div class="a" style="left:1561px;top:500px;width:17px;height:418px;background:#f0f0f0"></div>
<svg class="a" style="left:1564.0px;top:507.0px" width="10" height="6.0"><polyline transform="translate(1,1)" points="0,4.0 4.0,0 8,4.0" fill="none" stroke="#606060" stroke-width="2"/></svg>
<svg class="a" style="left:1564.0px;top:905.0px" width="10" height="6.0"><polyline transform="translate(1,1)" points="0,0 4.0,4.0 8,0" fill="none" stroke="#606060" stroke-width="2"/></svg>
<div class="a" style="left:1562px;top:518px;width:15px;height:17px;background:#cdcdcd"></div>
<div class="a" style="left:1137px;top:924px;width:89px;height:25px;background:#e1e1e1;border:2px solid #0078d7"></div>
<div class="t" style="left:1137px;top:929px;width:89px;text-align:center;letter-spacing:-0.3px">Close</div>
<div class="a" style="left:1398px;top:924px;width:179px;height:23px;background:#e1e1e1;border:1px solid #adadad"></div>
<div class="t " style="left:1402px;top:928px;letter-spacing:-0.3px">4 Bytes</div>
<svg class="a" style="left:1561.5px;top:931.75px" width="11" height="6.5"><polyline transform="translate(1,1)" points="0,0 4.5,4.5 9,0" fill="none" stroke="#333" stroke-width="1.2"/></svg>
</body></html>
